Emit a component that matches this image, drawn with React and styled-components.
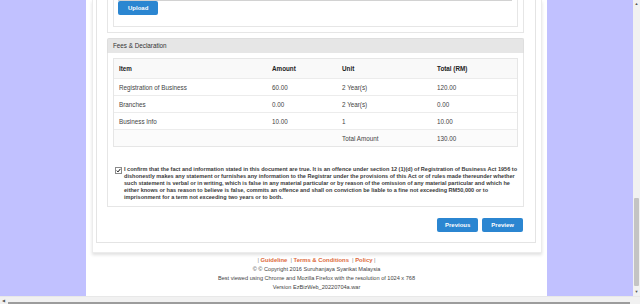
import styled, { createGlobalStyle } from 'styled-components';

const GlobalStyle = createGlobalStyle`
	html, body {
		margin: 0;
		padding: 0;
		background: #c1c1ff;
		font-family: 'Liberation Sans', Arial, sans-serif;
		color: #333;
	}
	#root {
		height: 304px;
		overflow: hidden;
	}
`;

const Screen = styled.div`
	display: flex;
	flex-direction: column;
	width: 640px;
	height: 304px;
`;

const Viewport = styled.div`
	display: flex;
	height: 296px;
`;

const Side = styled.div`
	width: ${(p) => p.$width}px;
	flex: none;
	background: #c1c1ff;
`;

const Page = styled.div`
	width: 461px;
	flex: none;
	background: #fff;
	display: flex;
	flex-direction: column;
`;

const OuterCard = styled.div`
	margin: 0 5px 0 6px;
	padding: 0 5px 9px 3px;
	border: 1px solid #ececec;
	border-top: none;
	box-shadow: 0 2px 3px rgba(0, 0, 0, 0.12);
`;

const InnerCard = styled.div`
	border: 1px solid #e4e4e4;
	border-top: none;
	padding: 0 11px 10px 10px;
`;

const UploadPanel = styled.div`
	border: 1px solid #e6e6e6;
	border-top: none;
	padding: 0 5px 5px 5px;
`;

const UploadBox = styled.div`
	height: 26px;
	border: 1px solid #e6e6e6;
	border-top: none;
	padding: 0 5px 0 4px;
	display: flex;
	flex-direction: column;
	align-items: flex-start;
`;

const TopRule = styled.div`
	align-self: stretch;
	height: 1px;
	background: #d2d2d2;
`;

const Button = styled.button`
	display: block;
	height: 14px;
	padding: 0 ${(p) => p.$pad || 7}px;
	border: none;
	border-radius: 2px;
	background: #2b86d1;
	color: #fff;
	font-family: 'Liberation Sans', Arial, sans-serif;
	font-weight: bold;
	font-size: 6px;
	line-height: 14px;
	cursor: pointer;
`;

const FeesPanel = styled.div`
	margin-top: 5px;
`;

const PanelHeading = styled.div`
	height: 14px;
	background: #e6e6e6;
	border: 1px solid #dedede;
	border-bottom: none;
	border-radius: 2px 2px 0 0;
	padding-left: 5px;
	font-size: 6.3px;
	line-height: 14px;
	color: #333;
`;

const PanelBody = styled.div`
	border: 1px solid #e6e6e6;
	border-top: none;
	padding: 5px 5px 5px 5px;
`;

const FeeTable = styled.div`
	border: 1px solid #e6e6e6;
	display: grid;
	grid-template-columns: 153px 70px 95px 1fr;
`;

const Cell = styled.div`
	box-sizing: border-box;
	height: ${(p) => (p.$head ? 19 : 17)}px;
	line-height: ${(p) => (p.$head ? 19 : 18)}px;
	padding-left: 5px;
	font-size: 6.3px;
	font-weight: ${(p) => (p.$head ? 'bold' : 'normal')};
	color: ${(p) => (p.$head ? '#222' : '#444')};
	background: ${(p) => (p.$head ? '#f9f9f9' : p.$shade ? '#fbfbfb' : '#fff')};
	border-top: ${(p) => (p.$first ? 'none' : '1px solid #ececec')};
	white-space: nowrap;
`;

const Declaration = styled.div`
	display: flex;
	align-items: flex-start;
	gap: 2px;
	margin-top: 19px;
	padding-left: 2px;
`;

const Check = styled.span`
	flex: none;
	width: 5px;
	height: 5px;
	margin-top: 1px;
	border: 1px solid #8a8a8a;
	background: #fff;
	display: flex;
	align-items: center;
	justify-content: center;
`;

const DeclText = styled.div`
	font-size: 5.55px;
	line-height: 7px;
	font-weight: bold;
	color: #3a3a3a;
`;

const Line = styled.div`
	white-space: nowrap;
`;

const Actions = styled.div`
	display: flex;
	justify-content: flex-end;
	gap: 4px;
	margin-top: 11px;
	padding-right: 1px;
`;

const Footer = styled.div`
	padding-top: 3px;
	text-align: center;
	font-size: 5.6px;
	line-height: 9px;
	color: #444;
`;

const Links = styled.div`
	color: #888;
	a {
		color: #dd6a3c;
		font-weight: bold;
		text-decoration: none;
		font-size: 5.9px;
	}
`;

const VScroll = styled.div`
	width: 7px;
	flex: none;
	background: #f1f1f1;
	display: flex;
	flex-direction: column;
	justify-content: space-between;
	align-items: center;
`;

const Arrow = styled.span`
	font-size: 4px;
	line-height: 8px;
	color: #555;
`;

const Thumb = styled.div`
	width: 5px;
	height: 88px;
	margin-top: auto;
	margin-bottom: 2px;
	background: #c4c4c4;
	border-radius: 1px;
`;

const HScroll = styled.div`
	height: 8px;
	background: #f1f1f1;
	display: flex;
	align-items: flex-start;
	padding-left: 2px;
	position: relative;
	border-top: 1px solid #e8e8e8;
	box-sizing: border-box;
`;

const HBar = styled.div`
	position: absolute;
	left: 8px;
	right: 10px;
	bottom: 0;
	height: 2px;
	background: #9c9c9c;
`;

const fees = [
	['Registration of Business', '60.00', '2 Year(s)', '120.00'],
	['Branches', '0.00', '2 Year(s)', '0.00'],
	['Business Info', '10.00', '1', '10.00'],
	['', '', 'Total Amount', '130.00'],
];

const declaration = [
	'I confirm that the fact and information stated in this document are true. It is an offence under section 12 (1)(d) of Registration of Business Act 1956 to',
	'dishonestly makes any statement or furnishes any information to the Registrar under the provisions of this Act or of rules made thereunder whether',
	'such statement is verbal or in writing, which is false in any material particular or by reason of the omission of any material particular and which he',
	'either knows or has reason to believe is false, commits an offence and shall on conviction be liable to a fine not exceeding RM50,000 or to',
	'imprisonment for a term not exceeding two years or to both.',
];

export default function App() {
	return (
		<>
			<GlobalStyle />
			<Screen>
				<Viewport>
					<Side $width={86} />
					<Page>
						<OuterCard>
							<InnerCard>
								<UploadPanel>
									<UploadBox>
										<TopRule />
										<Button $pad={10}>Upload</Button>
									</UploadBox>
								</UploadPanel>
								<FeesPanel>
									<PanelHeading>Fees &amp; Declaration</PanelHeading>
									<PanelBody>
										<FeeTable>
											{['Item', 'Amount', 'Unit', 'Total (RM)'].map((h) => (
												<Cell key={h} $head $first>
													{h}
												</Cell>
											))}
											{fees.map((row, i) =>
												row.map((v, j) => (
													<Cell key={`${i}-${j}`} $shade={i === 3}>
														{v}
													</Cell>
												))
											)}
										</FeeTable>
										<Declaration>
											<Check>
												<svg width="5" height="5" viewBox="0 0 10 10">
													<path
														d="M1.5 5.2 L4 7.8 L8.8 1.8"
														fill="none"
														stroke="#111"
														strokeWidth="2"
													/>
												</svg>
											</Check>
											<DeclText>
												{declaration.map((l) => (
													<Line key={l}>{l}</Line>
												))}
											</DeclText>
										</Declaration>
									</PanelBody>
								</FeesPanel>
								<Actions>
									<Button $pad={8}>Previous</Button>
									<Button $pad={9}>Preview</Button>
								</Actions>
							</InnerCard>
						</OuterCard>
						<Footer>
							<Links>
								| <a href="#">Guideline</a> &nbsp;| <a href="#">Terms &amp; Conditions</a>{' '}
								&nbsp;| <a href="#">Policy</a> |
							</Links>
							<div>© © Copyright 2016 Suruhanjaya Syarikat Malaysia</div>
							<div>Best viewed using Chrome and Mozilla Firefox with the resolution of 1024 x 768</div>
							<div>Version EzBizWeb_20220704a.war</div>
						</Footer>
					</Page>
					<Side $width={86} />
					<VScroll>
						<Arrow>▲</Arrow>
						<Thumb />
						<Arrow>▼</Arrow>
					</VScroll>
				</Viewport>
				<HScroll>
					<Arrow>◀</Arrow>
					<HBar />
				</HScroll>
			</Screen>
		</>
	);
}
